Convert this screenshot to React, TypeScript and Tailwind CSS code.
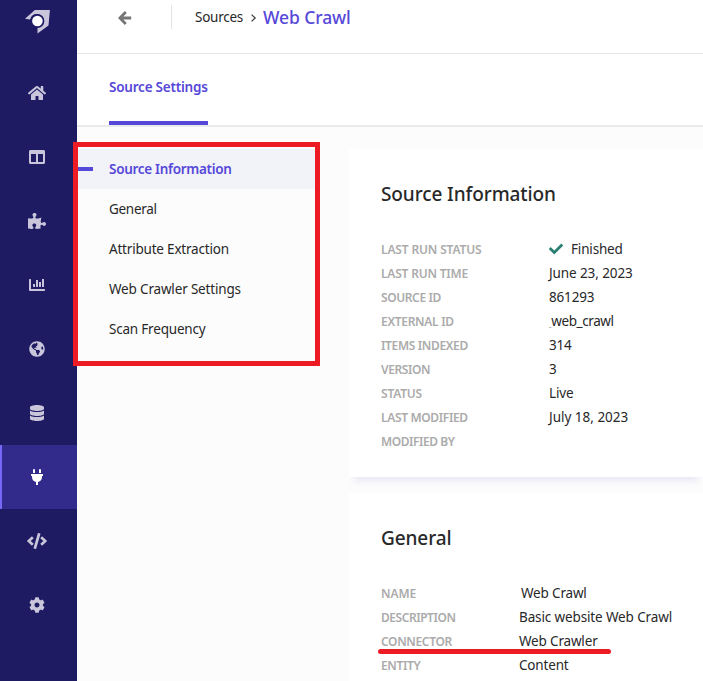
import type { ReactNode } from 'react';
import {
  FaChartBar,
  FaCheck,
  FaCode,
  FaCog,
  FaColumns,
  FaDatabase,
  FaGlobeAmericas,
  FaHome,
  FaPlug,
  FaPuzzlePiece,
} from 'react-icons/fa';

type Row = { label: string; labelClass: string; value: ReactNode; valueClass?: string };

const navItems = [
  { name: 'home', icon: <FaHome className="h-[18px] w-[18px]" /> },
  { name: 'columns', icon: <FaColumns className="h-4 w-4" /> },
  { name: 'extensions', icon: <FaPuzzlePiece className="h-[18px] w-[18px]" /> },
  { name: 'analytics', icon: <FaChartBar className="h-4 w-4" /> },
  { name: 'web', icon: <FaGlobeAmericas className="h-4 w-4" /> },
  { name: 'data', icon: <FaDatabase className="h-4 w-4" /> },
  { name: 'sources', icon: <FaPlug className="h-4 w-4" />, active: true },
  { name: 'code', icon: <FaCode className="h-5 w-5" /> },
  { name: 'settings', icon: <FaCog className="h-4 w-4" /> },
];

const infoRows: Row[] = [
  {
    label: 'LAST RUN STATUS',
    labelClass: 'tracking-[-0.15px]',
    value: (
      <span className="flex items-center">
        <FaCheck className="mr-2 h-3.5 w-3.5 text-[#2b8073]" />
        Finished
      </span>
    ),
  },
  { label: 'LAST RUN TIME', labelClass: 'tracking-[-0.2px]', value: 'June 23, 2023', valueClass: 'tracking-[-0.1px]' },
  { label: 'SOURCE ID', labelClass: 'tracking-[-0.4px]', value: '861293' },
  {
    label: 'EXTERNAL ID',
    labelClass: 'tracking-[-0.3px]',
    value: (
      <>
        <span className="relative top-px text-[5px] leading-none tracking-normal">_</span>web_crawl
      </>
    ),
    valueClass: 'tracking-[-0.4px]',
  },
  { label: 'ITEMS INDEXED', labelClass: 'tracking-[-0.35px]', value: '314' },
  { label: 'VERSION', labelClass: 'tracking-[-0.4px]', value: '3' },
  { label: 'STATUS', labelClass: 'tracking-[-0.2px]', value: 'Live' },
  { label: 'LAST MODIFIED', labelClass: 'tracking-[-0.35px]', value: 'July 18, 2023', valueClass: 'tracking-[-0.01px]' },
  { label: 'MODIFIED BY', labelClass: 'tracking-[-0.45px]', value: '' },
];

const generalRows: Row[] = [
  { label: 'NAME', labelClass: 'tracking-[-0.1px]', value: 'Web Crawl', valueClass: 'pl-0.5' },
  { label: 'DESCRIPTION', labelClass: 'tracking-[-0.45px]', value: 'Basic website Web Crawl', valueClass: 'tracking-[-0.13px]' },
  { label: 'CONNECTOR', labelClass: 'tracking-[-0.35px]', value: 'Web Crawler' },
  { label: 'ENTITY', labelClass: 'tracking-[-0.35px]', value: 'Content' },
];

const sections = [
  { name: 'General', cls: 'tracking-[-0.3px]' },
  { name: 'Attribute Extraction', cls: 'tracking-[-0.2px]' },
  { name: 'Web Crawler Settings', cls: 'tracking-[-0.17px]' },
  { name: 'Scan Frequency', cls: 'tracking-[-0.2px]' },
];

function Details({ rows, labelWidth }: { rows: Row[]; labelWidth: string }) {
  return (
    <dl>
      {rows.map((row) => (
        <div key={row.label} className="flex h-6 items-center whitespace-nowrap">
          <dt className={`${labelWidth} shrink-0 pt-0.5 text-xs leading-6 font-semibold text-[#ababab]`}>
            <span className={row.labelClass}>{row.label}</span>
          </dt>
          <dd className={row.valueClass ?? ''}>{row.value}</dd>
        </div>
      ))}
    </dl>
  );
}

export default function App() {
  return (
    <div className="flex h-[681px] w-[703px] overflow-hidden bg-[#fcfcfc] font-['Noto_Sans',sans-serif] text-[13.5px] leading-6 tracking-[-0.17px] text-[#282829]">
      <nav className="w-[77px] shrink-0 bg-[#1f1b63] text-[#c9c6dc]">
        <div className="h-[61px] pt-[9px] pl-[25px]">
          <svg className="h-[25px] w-[26px]" viewBox="0 0 26 25">
            <path d="M0 9.8 9.8 1h15.1l-1.4 15.5L12.5 24.5v-6A6.8 6.8 0 1 0 5.2 10.6z" fill="#c9c6dc" />
            <circle cx="12.4" cy="12" r="7" fill="#1f1b63" />
            <circle cx="12.4" cy="12" r="5.3" fill="#fff" />
          </svg>
        </div>
        {navItems.map((item) => (
          <div
            key={item.name}
            className={
              item.active
                ? 'flex h-16 items-center justify-center border-l-2 border-[#7568f5] bg-[#322b8b] pr-[5px] text-white'
                : 'flex h-16 items-center justify-center pr-[3px]'
            }
          >
            {item.icon}
          </div>
        ))}
      </nav>

      <div className="flex min-w-0 flex-1 flex-col">
        <header className="flex h-[54px] shrink-0 items-start border-b border-[#e6e6e6] bg-white">
          <svg
            className="mt-[11px] ml-[41px] h-[14px] w-[14px]"
            viewBox="0 0 14 14"
            fill="none"
            stroke="#757575"
            strokeWidth="2.8"
          >
            <path d="M7.8 1 1.9 7l5.9 6M2 7h11.2" />
          </svg>
          <div className="mt-[5px] ml-[39px] h-6 w-px bg-[#e4e4e4]" />
          <div className="ml-[23px] flex h-[33px] items-center whitespace-nowrap">
            <span className="w-12 tracking-[-0.25px]">Sources</span>
            <svg className="mt-0.5 mr-[7px] ml-2 h-2 w-[5px]" viewBox="0 0 5 8" fill="none" stroke="#333" strokeWidth="1.2">
              <path d="M.6.6 4.2 4 .6 7.4" />
            </svg>
            <span className="text-[17.5px] font-medium tracking-[-0.1px] text-[#5648d8]">Web Crawl</span>
          </div>
        </header>
        <div className="flex h-[73px] shrink-0 border-b-2 border-[#ebebeb] bg-white pl-8">
          <div className="flex h-[71px] w-[99px] items-center border-b-4 border-[#5648d8] pb-px font-semibold whitespace-nowrap text-[#5648d8]">
            <span className="tracking-[-0.22px]">Source Settings</span>
          </div>
        </div>

        <div className="flex min-h-0 flex-1">
          <aside className="-ml-1 mt-[15px] h-[224px] w-[247px] shrink-0 border-[5px] border-[#ed1c24] whitespace-nowrap">
            <div className="mt-[2px] flex h-10 items-center bg-[#f2f3f9] font-semibold text-[#5648d8]">
              <div className="mr-4 h-1 w-[15px] bg-[#5648d8]" />
              <span className="tracking-[-0.3px]">Source Information</span>
            </div>
            {sections.map((s) => (
              <div key={s.name} className="flex h-10 items-center pl-[31px]">
                <span className={s.cls}>{s.name}</span>
              </div>
            ))}
          </aside>

          <main className="ml-[29px] flex-1 pt-[22px]">
            <section className="h-[328px] bg-white pt-[31px] pl-8 shadow-[0_9px_7px_-5px_#e9e7f5]">
              <h2 className="text-[19px] leading-7 font-medium">
                <span className="tracking-[-0.1px]">Source Information</span>
              </h2>
              <div className="pt-[29px]">
                <Details rows={infoRows} labelWidth="w-[168px]" />
              </div>
            </section>
            <section className="relative mt-4 h-[300px] bg-white pt-[31px] pl-8">
              <h2 className="text-[19px] leading-7 font-medium">
                <span className="tracking-[-0.1px]">General</span>
              </h2>
              <div className="pt-[29px]">
                <Details rows={generalRows} labelWidth="w-[138px]" />
              </div>
              <div className="absolute top-[156px] left-[29px] h-[5px] w-[233px] rounded-full bg-[#ed1c24]" />
            </section>
          </main>
        </div>
      </div>
    </div>
  );
}
